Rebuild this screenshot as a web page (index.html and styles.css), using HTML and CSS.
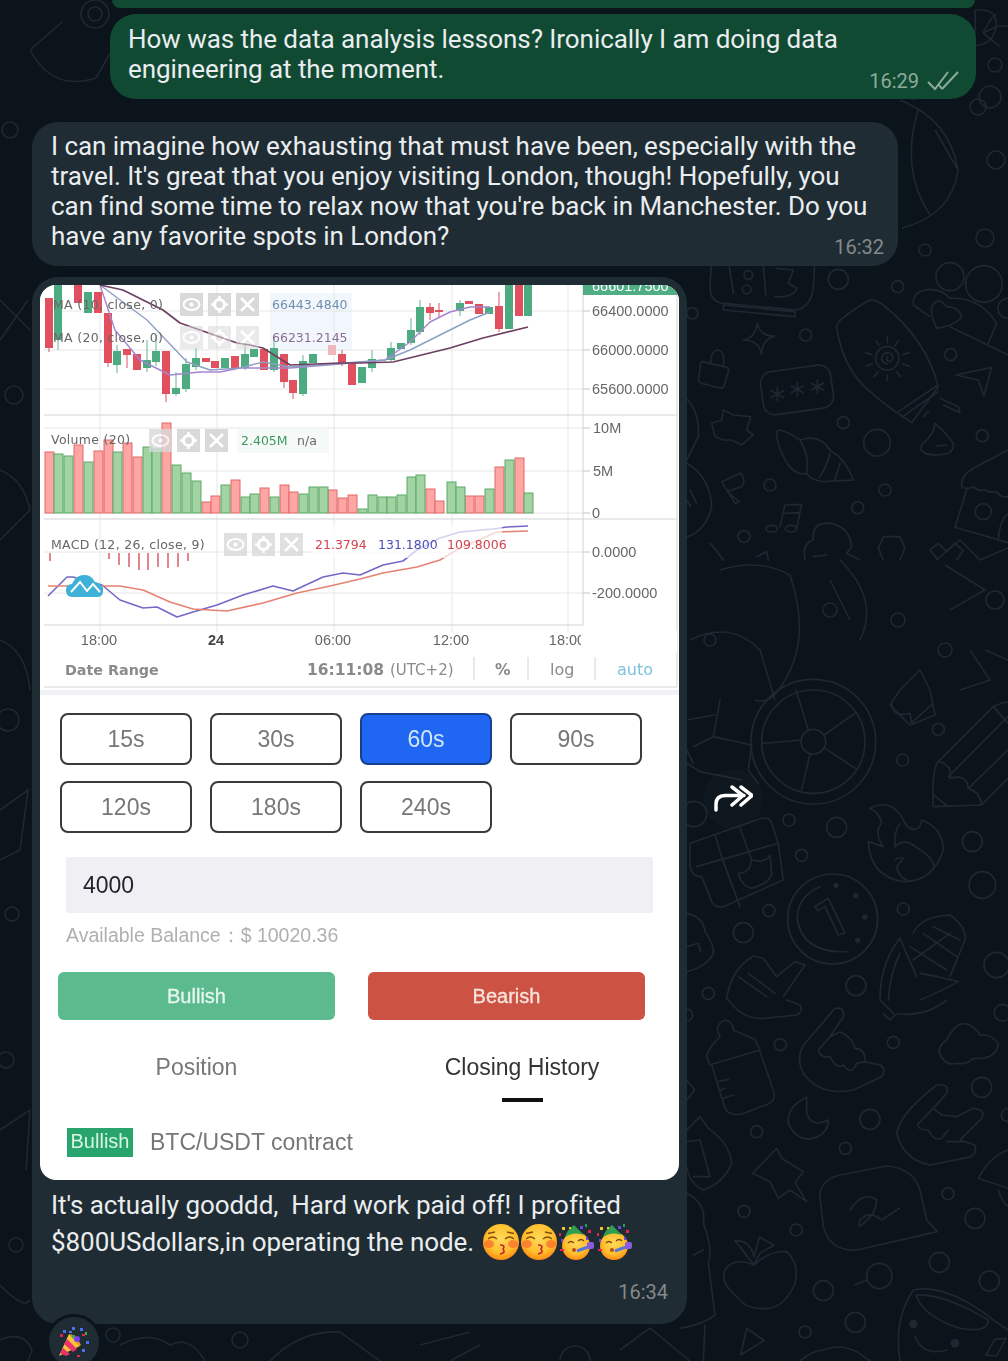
FILE: index.html
```html
<!DOCTYPE html>
<html lang="en">
<head>
  <meta charset="UTF-8">
  <title>Chat</title>
  <link rel="stylesheet" href="styles.css">
</head>
<body>
<div class="page">

  <!-- wallpaper doodles, traced from the reference -->
  <svg class="wallpaper" viewBox="0 0 1008 1361" width="1008" height="1361" fill="none">
    <!-- left and top, mostly hidden by bubbles -->
    <g class="thin">
      <circle cx="95" cy="14" r="14"/><circle cx="95" cy="14" r="7"/>
      <path d="M30 50 L62 22 M30 50 Q52 92 96 78 L112 50"/>
      <circle cx="14" cy="395" r="9"/><circle cx="12" cy="914" r="7"/><circle cx="16" cy="1245" r="7"/><circle cx="10" cy="130" r="8"/>
      <circle cx="8" cy="720" r="11"/><circle cx="6" cy="1060" r="8"/>
      <path d="M0 300 L30 330 M0 340 L28 300 M0 470 Q24 480 30 510 L0 540 M0 640 Q26 650 30 690 M0 810 L28 790 L20 850 L0 860 M0 1130 L30 1110 L26 1170 M0 1285 Q24 1310 30 1300"/>
      <path d="M0 1340 Q24 1330 32 1350 L28 1361 M120 1345 Q150 1330 170 1345 Q190 1335 205 1361 M270 1361 Q300 1330 340 1332 L380 1361 M420 1345 L470 1332 M450 1361 L480 1345 M560 1361 A14 14 0 0 1 590 1361 M620 1350 L650 1328 L690 1361"/>
      <circle cx="113" cy="1335" r="7"/><circle cx="240" cy="1340" r="8"/>
    </g>
    <!-- top right -->
    <g class="thin">
      <path d="M983 33 Q988 22 996 14 M983 33 L998 26 L1008 26 M983 33 L997 44 L1000 47"/>
      <path d="M975 10 Q998 8 996 26 Q994 44 974 46 Q976 26 975 10Z"/>
      <circle cx="995" cy="65" r="7"/><circle cx="978" cy="107" r="8"/><circle cx="990" cy="97" r="11"/>
      <path d="M900 100 Q950 120 958 170 Q952 215 902 228 M918 110 Q900 170 930 215 M935 130 L958 170"/>
      <circle cx="985" cy="238" r="9"/><circle cx="925" cy="250" r="6"/><circle cx="996" cy="160" r="9"/><circle cx="914" cy="92" r="7"/>
    </g>
    <!-- column right of the bubbles, 260 to 560 -->
    <g transform="translate(680 260) scale(.3333)" class="thick">
      <path d="M95 0 L90 80 Q90 125 130 130 L350 150 Q395 140 400 80 L405 0"/>
      <path d="M130 135 L345 155 L345 170 L130 150Z"/>
      <path d="M148 20 L160 100 M250 20 L258 108 M290 25 L340 30 L325 70 L350 85 Q340 115 285 110"/>
      <circle cx="205" cy="45" r="13"/><circle cx="200" cy="88" r="13"/>
      <circle cx="475" cy="58" r="30"/><circle cx="653" cy="80" r="18"/><circle cx="810" cy="50" r="42"/><circle cx="912" cy="72" r="55"/>
      <circle cx="37" cy="160" r="17"/><circle cx="377" cy="225" r="18"/><circle cx="812" cy="284" r="18"/>
      <circle cx="490" cy="488" r="18"/><circle cx="591" cy="548" r="40"/><circle cx="907" cy="527" r="18"/>
      <circle cx="270" cy="675" r="18"/><circle cx="615" cy="690" r="18"/><circle cx="533" cy="743" r="18"/><circle cx="192" cy="829" r="18"/>
      <circle cx="984" cy="145" r="30"/>
      <path d="M232 190 Q240 230 285 228 Q245 240 245 282 Q235 240 190 240 Q225 235 232 190Z"/>
      <path d="M68 305 L140 322 Q148 325 145 335 L133 375 Q130 386 120 384 L65 370 Q52 366 56 355 L62 312 Q62 304 68 305Z M92 310 Q92 270 115 270 Q135 275 130 318"/>
      <rect x="245" y="325" width="212" height="130" rx="35" transform="rotate(-8 350 390)"/>
      <path d="M292 382 V422 M274 392 L310 412 M310 392 L274 412 M352 368 V408 M334 378 L370 398 M370 378 L334 398 M412 360 V400 M394 370 L430 390 M430 370 L394 390"/>
      <path d="M470 200 Q468 180 560 125 Q580 112 610 135 Q740 240 775 380 L695 488 Q560 400 520 340 Q480 280 470 200Z"/>
      <path d="M655 455 L770 378 M668 470 L775 395 M780 415 L835 440 L840 458 L790 435 M730 470 L745 455"/>
      <circle cx="622" cy="295" r="35"/>
      <path d="M622 312 Q602 308 606 290 Q615 272 635 282 Q645 298 628 305 Q615 302 622 290"/>
      <path d="M622 230 V248 M588 243 L597 257 M655 243 L645 257 M557 278 L575 284 M688 278 L668 284 M557 318 L577 312 M688 318 L668 312 M582 350 L594 335 M662 350 L650 335 M622 362 V345"/>
      <path d="M700 130 Q700 90 750 88 Q790 90 810 115 Q900 110 950 190 L925 250"/>
      <path d="M770 205 Q735 130 780 122 L800 140 Q835 140 845 170 Q830 195 770 205Z M810 200 L984 285 M700 135 L750 170"/>
      <path d="M828 345 L935 322 L912 408 L895 360Z"/>
      <path d="M95 490 L125 480 L130 450 L160 465 L212 470 L200 510 L220 525 L185 555 L155 540 L130 540 L105 530Z"/>
      <path d="M290 515 Q300 500 360 540 Q420 520 450 570 Q500 600 520 660 L430 665 Q390 660 380 640 Q340 650 310 590 Q290 550 290 515Z M360 540 Q390 590 380 640 M450 580 Q440 620 420 650 M480 610 L465 660"/>
      <path d="M765 490 Q765 520 725 555 Q715 585 770 585 Q825 585 820 550 Q800 520 765 490Z M770 558 L800 555"/>
      <path d="M125 665 L182 640 Q200 660 185 680 L142 695 L178 725 L165 730Z"/>
      <path d="M300 800 L315 735 L365 733 L350 805 M315 760 L360 758"/>
      <ellipse cx="275" cy="806" rx="17" ry="10"/><ellipse cx="333" cy="806" rx="17" ry="10"/>
      <path d="M375 900 Q365 850 400 840 Q395 785 450 790 Q510 800 515 860 L500 880 L540 900 M400 890 L440 885"/>
      <path d="M610 830 L660 830 L675 865 L660 900 M610 830 L595 865 L610 900"/>
      <path d="M750 870 L775 850 L800 875 L825 850 L850 872 L830 900 M750 870 L775 900"/>
      <path d="M845 680 Q840 650 880 625 L984 570 M845 680 Q860 690 880 680 Q895 695 915 690 Q930 700 950 695 Q965 715 984 710 M860 690 L825 802 L984 848 M984 760 Q960 780 955 835"/>
      <circle cx="910" cy="755" r="24"/>
      <path d="M0 400 Q60 440 55 530 L20 600 M20 610 Q90 650 95 740 Q80 810 20 832 M30 690 L50 730 M20 720 L32 740"/>
      <path d="M90 850 Q110 870 130 900 M230 890 L260 875 L265 900"/>
    </g>
    <!-- 560 to 700 -->
    <g class="thin">
      <path d="M720 570 Q760 558 790 575 Q812 640 782 685 Q770 705 755 700"/>
      <path d="M690 640 Q730 620 760 650 L775 700"/>
      <path d="M936 560 L960 540 L980 560 L1008 548 M945 565 L985 590 L950 610 M830 580 L850 620 M840 560 Q880 600 860 640"/>
      <circle cx="830" cy="610" r="7"/><circle cx="898" cy="620" r="7"/><circle cx="945" cy="650" r="7"/><circle cx="995" cy="600" r="9"/><circle cx="710" cy="640" r="6"/>
      <path d="M900 690 L920 670 L930 690 L935 715 L910 725 L890 705Z M970 650 L990 680 L960 690"/>
      <path d="M1008 660 L985 650"/>
    </g>
    <!-- wheel, pencil, flame, coin, corn -->
    <g transform="translate(680 700) scale(.3333)" class="thick">
      <circle cx="400" cy="125" r="187"/><circle cx="400" cy="125" r="155"/><circle cx="400" cy="125" r="37"/>
      <path d="M365 120 L247 130 M385 90 L348 -30 M432 105 L525 40 M435 145 L530 208 M390 162 L365 268"/>
      <path d="M940 20 L775 185 Q755 205 760 320 L905 315 L984 235 M984 50 L805 230 M780 185 Q820 200 810 235 Q860 220 865 265 Q900 275 905 315 M760 285 L805 320"/>
      <path d="M940 20 Q984 0 984 10 M940 20 L984 70 M865 265 L984 150"/>
      <path d="M570 325 Q640 290 675 370 Q695 400 720 380 L725 360 Q790 385 790 450 Q760 545 670 545 Q570 530 565 425 L610 440 Q580 400 605 370 Q600 340 570 325Z"/>
      <path d="M660 370 Q640 400 645 440 Q665 420 690 430 Q760 470 762 500 M645 480 Q655 470 670 475 L650 500 Q655 530 680 540"/>
      <circle cx="458" cy="657" r="135"/>
      <path d="M420 560 Q350 590 352 660 Q370 760 500 755"/>
      <path d="M405 620 L445 595 L495 700 L475 705 L435 620 L415 632Z"/>
      <g class="dots"><circle cx="468" cy="556" r="8"/><circle cx="527" cy="587" r="8"/><circle cx="555" cy="651" r="8"/><circle cx="533" cy="721" r="8"/></g>
      <path d="M30 430 L245 355 Q270 350 275 370 L295 430 L310 540 L130 620 Q105 625 95 605 L65 530 Q30 530 30 490Z M50 500 L295 430 M105 405 L130 485 L180 620 M180 385 L215 480"/>
      <path d="M175 520 Q210 520 215 480 Q260 490 270 465 L275 520 Q270 550 215 565 Q185 560 175 520Z"/>
      <path d="M20 60 L105 45 M100 110 L215 135 L205 210 L235 250 M100 110 L120 0 M20 190 L60 215 L185 240 M40 140 L100 110 M20 150 L40 190"/>
      <path d="M20 640 Q70 650 75 695 Q105 740 100 760 Q80 800 20 815 M20 740 L55 730 L62 755"/>
      <circle cx="42" cy="342" r="38"/><circle cx="775" cy="88" r="18"/><circle cx="668" cy="180" r="18"/><circle cx="327" cy="360" r="18"/><circle cx="470" cy="382" r="30"/>
      <circle cx="877" cy="425" r="30"/><circle cx="365" cy="466" r="18"/><circle cx="907" cy="555" r="40"/><circle cx="670" cy="627" r="18"/><circle cx="267" cy="632" r="18"/>
      <circle cx="190" cy="698" r="30"/><circle cx="528" cy="857" r="30"/><circle cx="85" cy="880" r="18"/><circle cx="950" cy="795" r="38"/>
      <path d="M640 30 Q650 50 690 40 L695 68 L760 10 M635 10 L640 30"/>
      <path d="M140 900 Q150 810 220 768 L250 775 L290 830 L345 785 L375 795 L310 890 M205 820 L285 880 M175 830 L260 890"/>
      <path d="M600 900 Q600 790 660 715 L710 830 M700 700 Q720 650 810 645 Q860 680 855 720 L810 830 M700 780 L810 700 M730 700 L830 770 M760 680 L840 720 M690 740 L800 810 M720 820 Q780 830 835 845 Q770 880 720 900 M625 900 Q630 820 660 760"/>
    </g>
    <!-- bottom right -->
    <g transform="translate(680 1000) scale(.3333)" class="thick">
      <path d="M145 0 Q190 60 250 55 L350 45 Q370 35 360 15 L320 0"/>
      <circle cx="20" cy="45" r="18"/><circle cx="968" cy="38" r="25"/><circle cx="301" cy="134" r="18"/><circle cx="640" cy="127" r="18"/><circle cx="905" cy="262" r="30"/>
      <circle cx="570" cy="358" r="30"/><circle cx="230" cy="395" r="18"/><circle cx="496" cy="445" r="18"/><circle cx="804" cy="581" r="18"/><circle cx="885" cy="655" r="30"/>
      <circle cx="192" cy="634" r="18"/><circle cx="349" cy="690" r="18"/><circle cx="778" cy="787" r="30"/><circle cx="928" cy="843" r="30"/><circle cx="430" cy="872" r="30"/>
      <circle cx="526" cy="967" r="30"/><circle cx="375" cy="996" r="18"/><circle cx="984" cy="345" r="20"/>
      <path d="M610 40 L630 60 L645 45 L610 10 M650 42 Q740 50 800 0 M600 0 L640 40"/>
      <path d="M120 110 Q100 75 135 60 Q160 65 160 90 L225 118 L240 150 L88 195 L80 165 Q90 140 120 110Z"/>
      <path d="M95 195 L135 325 Q150 350 185 342 L265 312 Q290 300 280 270 L240 155 M115 245 L145 238 M122 270 L135 265 M130 295 L160 285"/>
      <path d="M465 25 Q495 20 490 50 L450 110 L480 95 Q520 115 525 145 Q560 150 555 185 L600 195 Q620 205 605 230 L520 270 Q420 290 370 220 Q345 170 375 130 Z"/>
      <path d="M450 110 L415 150 Q420 175 450 170 Q470 210 490 195 Q515 230 530 190 L555 185"/>
      <path d="M380 292 Q320 320 325 370 Q350 425 400 415 Q445 400 445 360 Q395 385 380 340Z"/>
      <path d="M800 120 Q770 140 780 165 Q800 200 830 190 Q860 195 880 175 Q950 180 955 130 Q930 100 900 105 Q870 60 835 75 Q815 90 800 120Z"/>
      <path d="M770 255 Q810 250 800 280 L760 325 L785 345 L830 350 L880 325 Q920 330 905 355 L840 420 L885 435 Q895 470 850 475 L750 495 Q670 480 650 400 Q660 340 770 255Z"/>
      <path d="M760 325 L715 370 Q710 390 745 390 Q760 425 785 415 L805 390 M800 425 L850 425"/>
      <path d="M895 535 Q930 470 984 450 M895 535 L984 565 M955 570 Q965 605 984 620"/>
      <path d="M290 445 L305 475 L370 515 L345 548 L380 605 L330 570 L295 595 L270 545 L218 520 Z"/>
      <path d="M420 590 Q420 540 480 525 L620 498 Q700 505 720 570 L740 660 L772 695 L530 750 Q450 755 430 680Z"/>
      <path d="M510 630 Q550 570 590 600 Q590 640 550 670 Q530 690 540 660 Q570 630 605 660 L658 625"/>
      <path d="M222 795 Q180 740 165 722 Q210 720 222 770 L238 712 L282 735 L240 760 L222 795 Q270 750 320 755 Q360 790 345 850 Q310 935 240 925 Q195 925 170 890 Q120 850 135 810 Q160 770 222 795Z"/>
      <circle cx="598" cy="828" r="38"/><path d="M560 840 L525 855"/>
      <path d="M200 985 L182 1065 L252 1022Z"/>
      <path d="M660 1083 Q640 960 700 870 Q800 850 940 960 L984 990 M708 885 Q790 880 925 960 Q925 1000 840 985 Q730 950 708 885Z M705 1010 Q730 1070 800 1050"/>
      <g class="dots"><circle cx="700" cy="972" r="13"/><circle cx="825" cy="1030" r="13"/></g>
      <path d="M945 1018 L978 1015 L950 1068 L918 1065Z"/>
      <path d="M20 240 L44 270 L20 300 M20 390 L60 350 L85 385 Q150 430 155 490 Q130 550 70 570 Q30 555 20 500 M20 425 L60 420 L90 530 L40 530"/>
      <path d="M20 580 Q80 610 70 670 Q100 750 85 790 L105 945 Q70 975 0 985 M40 765 L70 750 M70 1083 L75 975"/>
      <path d="M360 1083 Q400 1050 430 1050 Q480 1030 530 1055 L570 1083"/>
    </g>
  </svg>

  <main class="chat">
    <div class="bubble out stub"></div>

    <div class="bubble out">
      <p class="text">How was the data analysis lessons? Ironically I am doing data<br>engineering at the moment.</p>
      <div class="meta">
        <span>16:29</span>
        <svg class="ticks" viewBox="0 0 32 20" width="32" height="20" fill="none">
          <path d="M1 11 L8 18 L21 1 M15 18 L31 1 M12 14 L15 18"/>
        </svg>
      </div>
    </div>

    <div class="bubble in">
      <p class="text">I can imagine how exhausting that must have been, especially with the<br>travel. It's great that you enjoy visiting London, though! Hopefully, you<br>can find some time to relax now that you're back in Manchester. Do you<br>have any favorite spots in London?</p>
      <div class="meta">16:32</div>
    </div>

    <div class="media-row">
      <div class="bubble in media">
        <div class="shot">
          <svg class="chart" viewBox="40 285 639 405" width="639" height="405" fill="none">
            <defs>
              <g id="ic-eye"><rect width="23" height="23" fill="#d9d9d9"/><ellipse cx="11.5" cy="11.5" rx="8" ry="5.5" stroke="#fff" stroke-width="2"/><circle cx="11.5" cy="11.5" r="2" fill="#fff"/></g>
              <g id="ic-gear"><rect width="23" height="23" fill="#d9d9d9"/><circle cx="11.5" cy="11.5" r="5" stroke="#fff" stroke-width="3"/><path d="M11.5 3v3M11.5 17v3M3 11.5h3M17 11.5h3" stroke="#fff" stroke-width="2.5"/></g>
              <g id="ic-x"><rect width="23" height="23" fill="#d9d9d9"/><path d="M5 5L18 18M18 5L5 18" stroke="#fff" stroke-width="2.5"/></g>
            </defs>

            <rect x="40" y="285" width="639" height="405" fill="#fff"/>
            <rect x="270" y="293" width="82" height="58" fill="#f1f7fd"/>
            <rect x="237" y="429" width="92" height="24" fill="#f5faf8"/>

            <!-- grid -->
            <path class="grid" d="M44 311H583M44 350H583M44 389H583M44 428H583M44 471H583M44 513H583M44 552H583M44 593H583M100 285V632M217 285V632M334 285V632M452 285V632M568 285V632"/>
            <path class="frame" d="M44 415H677M44 519H677M44 625H583M583 285V625M677 285V687M44 687H677"/>
            <path class="tick" d="M583 311H590M583 350H590M583 389H590M583 428H590M583 471H590M583 513H590M583 552H590M583 593H590"/>

            <!-- volume -->
            <g class="vol-dn">
              <rect x="45" y="452" width="9" height="61"/><rect x="74" y="445" width="9" height="68"/><rect x="94" y="451" width="9" height="62"/><rect x="104" y="440" width="9" height="73"/><rect x="123" y="443" width="9" height="70"/><rect x="133" y="457" width="9" height="56"/><rect x="162" y="423" width="9" height="90"/><rect x="202" y="502" width="9" height="11"/><rect x="211" y="496" width="9" height="17"/><rect x="231" y="480" width="9" height="33"/><rect x="260" y="488" width="9" height="25"/><rect x="280" y="485" width="9" height="28"/><rect x="289" y="492" width="9" height="21"/><rect x="328" y="490" width="9" height="23"/><rect x="338" y="498" width="9" height="15"/><rect x="348" y="495" width="9" height="18"/><rect x="426" y="489" width="9" height="24"/><rect x="435" y="501" width="9" height="12"/><rect x="465" y="496" width="9" height="17"/><rect x="475" y="496" width="9" height="17"/><rect x="495" y="467" width="9" height="46"/><rect x="515" y="458" width="9" height="55"/>
            </g>
            <g class="vol-up">
              <rect x="54" y="454" width="9" height="59"/><rect x="64" y="456" width="9" height="57"/><rect x="84" y="462" width="9" height="51"/><rect x="113" y="452" width="9" height="61"/><rect x="143" y="447" width="9" height="66"/><rect x="152" y="449" width="9" height="64"/><rect x="172" y="465" width="9" height="48"/><rect x="182" y="473" width="9" height="40"/><rect x="192" y="481" width="9" height="32"/><rect x="221" y="485" width="9" height="28"/><rect x="241" y="497" width="9" height="16"/><rect x="250" y="494" width="9" height="19"/><rect x="270" y="497" width="9" height="16"/><rect x="299" y="494" width="9" height="19"/><rect x="309" y="487" width="9" height="26"/><rect x="319" y="487" width="9" height="26"/><rect x="358" y="509" width="9" height="4"/><rect x="368" y="495" width="9" height="18"/><rect x="378" y="497" width="9" height="16"/><rect x="387" y="497" width="9" height="16"/><rect x="397" y="495" width="9" height="18"/><rect x="407" y="477" width="9" height="36"/><rect x="416" y="475" width="9" height="38"/><rect x="447" y="482" width="9" height="31"/><rect x="456" y="487" width="9" height="26"/><rect x="485" y="489" width="9" height="24"/><rect x="505" y="460" width="9" height="53"/><rect x="524" y="493" width="9" height="20"/>
            </g>

            <!-- candles -->
            <path class="wick-dn" d="M49 298V352M108 313V367M127 349V368M166 351V402M284 354V388M293 380V399M342 350V366M430 303V320M439 303V318M499 292V332"/>
            <path class="wick-up" d="M58 285V350M117 345V373M147 340V372M156 335V366M176 372V396M186 358V392M196 348V370M245 345V370M274 335V372M303 355V396M372 350V372M391 342V362M411 318V345M420 300V335M460 300V316"/>
            <path class="dn" d="M45 298h8v50h-8zM74 285h8v18h-8zM94 292h8v21h-8zM104 313h8v50h-8zM123 349h8v6h-8zM133 354h8v16h-8zM162 351h8v43h-8zM202 358h8v4h-8zM211 361h8v7h-8zM231 356h8v12h-8zM260 349h8v21h-8zM280 354h8v28h-8zM289 380h8v13h-8zM338 354h8v9h-8zM348 363h8v22h-8zM426 307h8v6h-8zM435 310h8v2h-8zM465 301h8v3h-8zM475 304h8v10h-8zM495 306h8v23h-8zM515 285h8v31h-8z"/>
            <rect x="328" y="345" width="8" height="10" fill="#f0b6bd"/>
            <path class="up" d="M54 285h8v55h-8zM84 292h8v21h-8zM113 351h8v14h-8zM143 360h8v8h-8zM152 351h8v11h-8zM172 388h8v6h-8zM182 364h8v25h-8zM192 358h8v9h-8zM221 358h8v10h-8zM241 354h8v14h-8zM250 349h8v8h-8zM270 348h8v22h-8zM299 361h8v33h-8zM309 354h8v9h-8zM358 367h8v16h-8zM368 359h8v9h-8zM387 348h8v12h-8zM397 343h8v6h-8zM407 330h8v13h-8zM416 307h8v25h-8zM456 303h8v8h-8zM485 307h8v7h-8zM505 285h8v44h-8zM524 285h8v31h-8z"/>

            <!-- moving averages -->
            <path class="ma-c" d="M100 285L115 330L140 360L170 375L200 372L220 372L240 368L290 368L340 364L385 360L410 342L430 322L450 312L470 307L490 307"/>
            <path class="ma-b" d="M100 285L147 320L187 362L210 370L240 368L263 362L290 367L345 363L385 360L410 350L440 335L470 320L490 312"/>
            <path class="ma-a" d="M100 285L123 290L163 310L180 323L237 343L250 345L263 348L290 365L340 363L360 363L393 362L450 348L483 338L528 327"/>

            <!-- macd -->
            <path class="macd-bars" d="M50 553V561M109 553V559M119 553V565M129 553V567M139 553V570M148 553V570M158 553V567M168 553V568M178 553V567M188 553V561"/>
            <path class="macd-blue" d="M48 596L67 577L73 577L102 585L120 600L143 608L157 607L177 617L193 612L217 605L243 595L273 586L293 591L323 577L343 573L360 575L383 565L403 561L417 550L440 538L460 532L493 529L507 527L528 526"/>
            <path class="macd-red" d="M48 586L63 586L102 586L120 586L143 590L170 602L193 609L227 611L263 603L297 593L330 586L360 579L383 573L417 567L440 560L460 548L497 532L528 531"/>
            <rect class="legend-veil" x="312" y="526" width="190" height="32"/>
            <path d="M72 597Q66 597 66 590Q66 584 72 584Q76 574 86 575Q92 576 95 582Q104 584 103 591Q103 597 97 597Z" fill="#3fb0d8"/>
            <path d="M71 592L80 582L87 591L93 584L100 592" stroke="#fff" stroke-width="2"/>

            <!-- legends -->
            <text class="legend name" x="53" y="309">MA (10, close, 0)</text>
            <text class="legend name" x="53" y="342">MA (20, close, 0)</text>
            <use href="#ic-eye" x="180" y="293"/><use href="#ic-gear" x="208" y="293"/><use href="#ic-x" x="236" y="293"/>
            <g class="faded"><use href="#ic-eye" x="180" y="326"/><use href="#ic-gear" x="208" y="326"/><use href="#ic-x" x="236" y="326"/></g>
            <text class="legend val-ma1" x="272" y="309">66443.4840</text>
            <text class="legend val-ma2" x="272" y="342">66231.2145</text>

            <text class="legend name" x="51" y="444">Volume (20)</text>
            <use href="#ic-eye" class="half" x="149" y="429"/><use href="#ic-gear" x="177" y="429"/><use href="#ic-x" x="205" y="429"/>
            <text class="legend val-vol" x="241" y="445">2.405M</text>
            <text class="legend" x="297" y="445">n/a</text>

            <text class="legend name" x="51" y="549">MACD (12, 26, close, 9)</text>
            <use href="#ic-eye" class="half" x="224" y="533"/><use href="#ic-gear" class="half" x="252" y="533"/><use href="#ic-x" class="half" x="280" y="533"/>
            <text class="legend val-red" x="315" y="549">21.3794</text>
            <text class="legend val-blue" x="378" y="549">131.1800</text>
            <text class="legend val-red" x="447" y="549">109.8006</text>

            <!-- price scale -->
            <rect x="583" y="285" width="96" height="10" fill="#4fae84"/>
            <text class="axis last" x="592" y="291">66601.7500</text>
            <text class="axis" x="592" y="316">66400.0000</text>
            <text class="axis" x="592" y="355">66000.0000</text>
            <text class="axis" x="592" y="394">65600.0000</text>
            <text class="axis" x="593" y="433">10M</text>
            <text class="axis" x="593" y="476">5M</text>
            <text class="axis" x="592" y="518">0</text>
            <text class="axis" x="592" y="557">0.0000</text>
            <text class="axis" x="592" y="598">-200.0000</text>

            <!-- time scale -->
            <text class="axis mid" x="99" y="645">18:00</text>
            <text class="axis mid strong" x="216" y="645">24</text>
            <text class="axis mid" x="333" y="645">06:00</text>
            <text class="axis mid" x="451" y="645">12:00</text>
            <text class="axis mid" x="567" y="645">18:00</text>
            <rect x="581" y="630" width="96" height="22" fill="#fff"/>

            <!-- footer -->
            <text class="foot bold range" x="65" y="675">Date Range</text>
            <text class="foot bold" x="307" y="675">16:11:08</text>
            <text class="foot utc" x="390" y="675">(UTC+2)</text>
            <text class="foot bold" x="495" y="675">%</text>
            <text class="foot" x="550" y="675">log</text>
            <text class="foot auto" x="617" y="675">auto</text>
            <path class="frame" d="M474 657V680M528 657V680M595 657V680"/>
          </svg>
          <div class="strip"></div>

          <div class="controls">
            <div class="periods">
              <button class="period">15s</button>
              <button class="period">30s</button>
              <button class="period active">60s</button>
              <button class="period">90s</button>
              <button class="period">120s</button>
              <button class="period">180s</button>
              <button class="period">240s</button>
            </div>
            <div class="amount">4000</div>
            <div class="balance">Available Balance：$ 10020.36</div>
            <div class="actions">
              <button class="action bull">Bullish</button>
              <button class="action bear">Bearish</button>
            </div>
            <div class="tabs">
              <div class="tab">Position</div>
              <div class="tab current">Closing History</div>
            </div>
            <div class="contract"><span class="badge">Bullish</span><span>BTC/USDT contract</span></div>
          </div>
        </div>

        <p class="text caption">It's actually gooddd,&nbsp; Hard work paid off! I profited<br>$800USdollars,in operating the node.
          <svg class="emoji" viewBox="0 0 36 36" width="36" height="36"><use href="#kiss"/></svg><svg class="emoji" viewBox="0 0 36 36" width="36" height="36"><use href="#kiss"/></svg><svg class="emoji" viewBox="0 0 36 36" width="36" height="36"><use href="#party"/></svg><svg class="emoji" viewBox="0 0 36 36" width="36" height="36"><use href="#party"/></svg>
        </p>
        <div class="meta tall">16:34</div>

        <div class="reaction">
          <svg viewBox="0 0 32 32" width="32" height="32">
            <path d="M1 30L11 8L22 20Z" fill="#f7c33f"/>
            <path d="M2 27L5 22L12 28L8 30ZM6 18L9 13L19 23L15 26Z" fill="#e8336b"/>
            <path d="M11 8Q18 8 23 19L21 20Q15 12 11 8Z" fill="#e89a2a"/>
            <circle cx="19" cy="13" r="3" fill="#7b3ff0"/>
            <path d="M5 4h3v3H5zM14 1h3v3h-3zM22 2h3v3h-3zM28 15h3v3h-3zM24 23h3v3h-3zM11 5h3v2h-3z" fill="#4a6ff0"/>
            <path d="M2 8h3v3H2zM19 29h3v2h-3zM24 8h3v2h-3z" fill="#e0244e"/>
            <path d="M27 6h2v3h-2zM14 9h3v3h-3z" fill="#4aa84a"/>
          </svg>
        </div>
      </div>

      <div class="forward">
        <svg viewBox="0 0 40 30" width="40" height="30" fill="none">
          <path d="M3 26V20Q3 12 12 11.500H31M19 3L30 11.500L19 21M28 3L39 11.500L28 21"/>
        </svg>
      </div>
    </div>
  </main>

  <!-- shared emoji drawings -->
  <svg class="defs" width="0" height="0">
    <defs>
      <radialGradient id="face" cx=".5" cy=".4" r=".6">
        <stop offset="0" stop-color="#ffd95a"/><stop offset=".65" stop-color="#ffc02e"/><stop offset="1" stop-color="#ff8a14"/>
      </radialGradient>
      <symbol id="kiss" viewBox="0 0 36 36">
        <circle cx="18" cy="18" r="18" fill="url(#face)"/>
        <ellipse cx="6" cy="20" rx="5" ry="4" fill="#fb6a2e" opacity=".7"/>
        <ellipse cx="30" cy="20" rx="5" ry="4" fill="#fb6a2e" opacity=".7"/>
        <path d="M5 15Q9.500 11 14 15M5 9.500L12 8M22 15Q26.500 11 31 15M24 8L31 9.500" fill="none" stroke="#8a4b10" stroke-width="1.300"/>
        <path d="M17 21Q23 21 20 25Q23 29 17 30" fill="none" stroke="#c7233a" stroke-width="1.700"/>
      </symbol>
      <symbol id="party" viewBox="0 0 36 36">
        <circle cx="17" cy="22" r="14" fill="url(#face)"/>
        <path d="M6 13Q8 6 15 1L25 11Q15 7 6 13Z" fill="#2f9e50"/>
        <path d="M9 19Q12 16 15 19M19 17Q22 14 25 17" fill="none" stroke="#7a4510" stroke-width="1.300"/>
        <circle cx="15" cy="26" r="2" fill="#b5501a"/>
        <path d="M18 27L29 23" stroke="#5a76d8" stroke-width="3"/>
        <rect x="28" y="18" width="7" height="7" rx="2" fill="#8a5be0"/>
        <path d="M3 3h3v3H3zM10 3h2v2h-2z" fill="#f2c230"/>
        <path d="M0 9h2v3H0zM29 6h3v3h-3zM1 25h4v2H1z" fill="#e8244e"/>
        <path d="M2 15h2v3H2zM21 2h3v3h-3zM27 13h2v3h-2z" fill="#6a4be0"/>
        <path d="M26 0h2v3h-2z" fill="#2f9e50"/>
      </symbol>
    </defs>
  </svg>
</div>
</body>
</html>
```

FILE: styles.css
```css
* { box-sizing: border-box; }

html, body {
  margin: 0;
  padding: 0;
  background: #0b141a;
}

.page {
  position: relative;
  width: 1008px;
  height: 1361px;
  overflow: hidden;
  font-family: Roboto, "Liberation Sans", sans-serif;
}

.wallpaper {
  position: absolute;
  top: 0;
  left: 0;
}
.wallpaper .thin { stroke: #1f2830; stroke-width: 1.6; }
.wallpaper .thick { stroke: #1f2830; stroke-width: 5; stroke-linecap: round; stroke-linejoin: round; }
.wallpaper .dots { fill: #1f2830; stroke: none; }

.defs { position: absolute; }

.chat {
  position: relative;
  display: flex;
  flex-direction: column;
}

/* bubbles */
.bubble {
  border-radius: 26px;
  color: #e9edef;
}
.out {
  background: #114a33;
  margin-left: 110px;
  width: 866px;
  padding: 10px 18px 0;
  height: 85px;
  margin-top: 6px;
}
.stub {
  height: 8px;
  padding: 0;
  margin-top: 0;
  margin-left: 112px;
  width: 863px;
  border-radius: 0 0 24px 24px;
}
.in {
  background: #202c33;
  margin-left: 32px;
}
.bubble.in:not(.media) {
  margin-top: 23px;
  width: 866px;
  height: 144px;
  padding: 9px 14px 0 19px;
}

.text {
  margin: 0;
  font-size: 26px;
  line-height: 30px;
  letter-spacing: -0.05px;
}

.meta {
  display: flex;
  justify-content: flex-end;
  align-items: center;
  gap: 8px;
  font-size: 20px;
  line-height: 24px;
  color: #84898d;
}
.out .meta {
  color: #8eab9b;
  margin-top: -15px;
  margin-right: -1px;
}
.in .meta { margin-top: -16px; }
.in .meta.tall { margin-top: 19px; margin-right: 11px; }
.ticks { stroke: #8eab9b; stroke-width: 2; }

.media-row {
  display: flex;
  align-items: center;
  margin-top: 11px;
}
.bubble.media {
  position: relative;
  width: 655px;
  height: 1047px;
  padding: 8px;
}
.forward {
  width: 60px;
  height: 60px;
  margin-left: 16px;
  margin-top: -3px;
  border-radius: 50%;
  background: rgba(255, 255, 255, 0.02);
  display: flex;
  align-items: center;
  justify-content: center;
}
.forward svg { stroke: #fff; stroke-width: 3.5; stroke-linecap: round; stroke-linejoin: round; }

.caption {
  padding: 7px 0 0 11px;
  line-height: 37px;
}
.emoji {
  vertical-align: -9px;
  margin-left: 2px;
}

.reaction {
  position: absolute;
  left: 14px;
  bottom: -46px;
  width: 56px;
  height: 56px;
  border-radius: 50%;
  background: #202c33;
  border: 3px solid #0b141a;
  display: flex;
  align-items: center;
  justify-content: center;
}

/* screenshot inside the bubble */
.shot {
  width: 639px;
  height: 895px;
  background: #fff;
  border-radius: 16px;
  overflow: hidden;
}
.chart {
  display: block;
  filter: blur(0.6px);
}
.strip { height: 5px; background: #f1f2f5; }

.grid { stroke: #e6e6e6; stroke-width: 1; }
.frame { stroke: #d2d4d6; stroke-width: 1; }
.tick { stroke: #c4c6c8; stroke-width: 1; }
.vol-dn { fill: #ffa6a4; stroke: #e0696a; stroke-width: 1; }
.vol-up { fill: #a2d3a2; stroke: #5ba868; stroke-width: 1; }
.dn { fill: #e0505e; }
.up { fill: #4dab82; }
.wick-dn { stroke: #e0707a; stroke-width: 1.2; }
.wick-up { stroke: #7cc2a2; stroke-width: 1.2; }
.ma-a { stroke: #6d3f5f; stroke-width: 1.6; stroke-linejoin: round; }
.ma-b { stroke: #8e9fc4; stroke-width: 1.4; stroke-linejoin: round; }
.ma-c { stroke: #a585cf; stroke-width: 1.4; stroke-linejoin: round; }
.macd-bars { stroke: #d8525f; stroke-width: 1.4; }
.macd-blue { stroke: #7468c8; stroke-width: 1.6; stroke-linejoin: round; }
.macd-red { stroke: #e58272; stroke-width: 1.6; stroke-linejoin: round; }
.legend-veil { fill: rgba(255, 255, 255, 0.7); }
.faded { opacity: 0.55; }
.half { opacity: 0.8; }

.legend {
  font-family: "DejaVu Sans", sans-serif;
  font-size: 12.5px;
  fill: #666;
}
.legend.name { letter-spacing: 0.3px; }
.val-ma1 { fill: #6f8fae; }
.val-ma2 { fill: #8a6f92; }
.val-vol { fill: #3f9a60; }
.val-red { fill: #d2424f; }
.val-blue { fill: #4a4fb8; }

.axis {
  font-family: "Liberation Sans", sans-serif;
  font-size: 14.5px;
  fill: #666;
}
.axis.mid { text-anchor: middle; }
.axis.last { fill: #fff; }
.axis.strong { font-weight: bold; fill: #444; }

.foot {
  font-family: "DejaVu Sans", sans-serif;
  font-size: 16px;
  fill: #8a8a8a;
}
.foot.bold { font-weight: bold; font-size: 15.500px; }
.foot.range { font-size: 14.300px; }
.foot.utc { font-size: 15px; }
.foot.auto { fill: #7dc3dc; }

.controls {
  filter: blur(0.3px);
  font-family: "Liberation Sans", sans-serif;
}

.periods {
  display: grid;
  grid-template-columns: repeat(4, 132px);
  grid-auto-rows: 52px;
  column-gap: 18px;
  row-gap: 16px;
  margin: 18px 0 0 20px;
}
.period {
  font: inherit;
  font-size: 23px;
  color: #777;
  background: #fff;
  border: 2px solid #3a3a3a;
  border-radius: 8px;
  padding: 0;
}
.period.active {
  background: #1f66f2;
  border-color: #17418f;
  color: #cfe6fb;
}

.amount {
  margin: 24px 0 0 26px;
  width: 587px;
  height: 56px;
  line-height: 56px;
  padding-left: 17px;
  font-size: 23px;
  color: #23232e;
  background: #f0f0f4;
  border-radius: 2px;
}
.balance {
  margin: 10px 0 0 26px;
  height: 24px;
  line-height: 24px;
  font-size: 19.500px;
  color: #b0b0b0;
}

.actions {
  display: flex;
  gap: 33px;
  margin: 25px 0 0 18px;
}
.action {
  font: inherit;
  font-size: 20px;
  width: 277px;
  height: 48px;
  border: none;
  border-radius: 6px;
  padding: 0;
  -webkit-text-stroke: 0.3px currentColor;
}
.bull { background: #5cba8f; color: #e6f7ee; }
.bear { background: #cc5344; color: #fbe3de; }

.tabs {
  display: grid;
  grid-template-columns: 277px 200px;
  column-gap: 87px;
  margin: 34px 0 0 18px;
}
.tab {
  text-align: center;
  font-size: 23px;
  line-height: 26px;
  color: #777;
  height: 48px;
}
.tab.current { color: #333; }
.tab.current::after {
  content: "";
  display: block;
  width: 41px;
  height: 4px;
  margin: 18px auto 0;
  background: #111;
}

.contract {
  display: flex;
  align-items: center;
  gap: 17px;
  margin: 26px 0 0 27px;
  font-size: 23px;
  color: #777;
}
.badge {
  width: 66px;
  height: 29px;
  line-height: 27px;
  text-align: center;
  font-size: 20px;
  color: #d8f5e4;
  background: #27a56c;
}
```
